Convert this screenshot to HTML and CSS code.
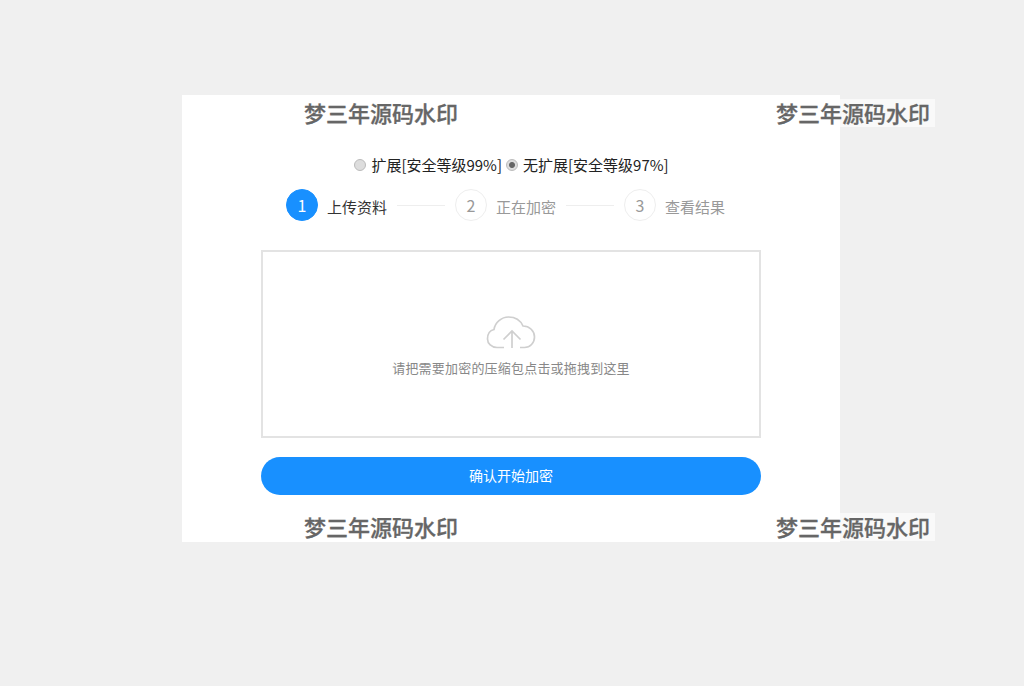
FILE: index.html
```html
<!DOCTYPE html>
<html lang="zh-CN">
  <head>
    <meta charset="UTF-8" />
    <title>加密</title>
    <link rel="stylesheet" href="styles.css">
  </head>
  <body>
    <div class="card">
      <div class="mode-row">
        <label class="mode"><span class="radio"></span>扩展[安全等级99%]</label>
        <label class="mode"><span class="radio checked"></span>无扩展[安全等级97%]</label>
      </div>

      <div class="steps">
        <div class="step active"><span class="num">1</span><span class="name">上传资料</span></div>
        <span class="line"></span>
        <div class="step"><span class="num">2</span><span class="name">正在加密</span></div>
        <span class="line"></span>
        <div class="step"><span class="num">3</span><span class="name">查看结果</span></div>
      </div>

      <div class="drop-box">
        <svg class="cloud" width="50" height="34" viewBox="0 0 50 34" fill="none">
          <path d="M18 31.500H11C5.500 31.500 1.500 27.500 1.500 23C1.500 18 3.500 14.500 8 13.500C9 6.500 15.500 1 22.500 1C29 1 34.500 4.500 37 10C43.500 10 48.500 15 48.500 21C48.500 27 44 31.500 38.500 31.500H34" stroke="#cfcfcf" stroke-width="1.700"/>
          <path d="M26 32V15M17.500 23.500L26 15L34.500 23.500" stroke="#cfcfcf" stroke-width="1.700"/>
        </svg>
        <p class="hint">请把需要加密的压缩包点击或拖拽到这里</p>
      </div>

      <button class="submit" type="button">确认开始加密</button>
    </div>

    <span class="mark mark-tl">梦三年源码水印</span>
    <span class="mark mark-tr">梦三年源码水印</span>
    <span class="mark mark-bl">梦三年源码水印</span>
    <span class="mark mark-br">梦三年源码水印</span>
  </body>
</html>
```

FILE: styles.css
```css
html,
body {
  height: 100%;
}
body {
  margin: 0;
  padding: 95px 0 0 182px;
  box-sizing: border-box;
  overflow: hidden;
  background: #f0f0f0;
  font-family: "Noto Sans CJK SC", "Noto Sans", sans-serif;
}
.card {
  width: 658px;
  height: 447px;
  padding-top: 60px;
  box-sizing: border-box;
  background: #fff;
}
.mode-row {
  display: flex;
  justify-content: center;
  gap: 4px;
  height: 20px;
  padding-left: 1px;
  font-size: 15px;
  line-height: 20px;
  color: #222;
}
.mode {
  display: flex;
  align-items: center;
}
.radio {
  width: 12px;
  height: 12px;
  margin-right: 5px;
  border: 1px solid #bbb;
  border-radius: 50%;
  box-sizing: border-box;
  background: #ddd;
}
.radio.checked {
  background: radial-gradient(circle, #666 0, #666 2.5px, #ddd 3.5px);
}
.steps {
  display: flex;
  align-items: center;
  justify-content: center;
  margin-top: 14px;
  padding-right: 11px;
  height: 32px;
}
.step {
  display: flex;
  align-items: center;
  gap: 9px;
  font-size: 15px;
  color: #999;
}
.name {
  margin-top: 2px;
}
.num {
  width: 32px;
  height: 32px;
  border: 1px solid #eee;
  border-radius: 50%;
  box-sizing: border-box;
  font-size: 16px;
  line-height: 30px;
  text-align: center;
}
.step.active {
  color: #333;
}
.step.active .num {
  border-color: #1890ff;
  background: #1890ff;
  color: #fff;
}
.line {
  width: 48px;
  height: 1px;
  margin: 0 10px;
  background: #eee;
}
.drop-box {
  display: flex;
  flex-direction: column;
  align-items: center;
  width: 500px;
  height: 188px;
  margin: 29px auto 0;
  padding-top: 64px;
  border: 2px solid #e3e3e3;
  box-sizing: border-box;
}
.cloud {
  display: block;
}
.hint {
  margin: 8px 0 0;
  font-size: 13px;
  letter-spacing: 0.2px;
  line-height: 20px;
  color: #888;
}
.submit {
  display: block;
  width: 500px;
  height: 38px;
  margin: 19px auto 0;
  padding: 0 0 2px;
  border: 0;
  border-radius: 19px;
  background: #1890ff;
  color: #fff;
  font-family: inherit;
  font-size: 14px;
}
.mark {
  position: absolute;
  padding: 0 5px 2px 0;
  font-size: 22px;
  font-weight: 500;
  line-height: 26px;
  color: #666;
  background: rgba(255, 255, 255, 0.6);
  -webkit-text-stroke: 0.3px #666;
}
.mark-tl {
  left: 304px;
  top: 99px;
}
.mark-tr {
  left: 776px;
  top: 99px;
}
.mark-bl {
  left: 304px;
  top: 513px;
}
.mark-br {
  left: 776px;
  top: 513px;
}
```
